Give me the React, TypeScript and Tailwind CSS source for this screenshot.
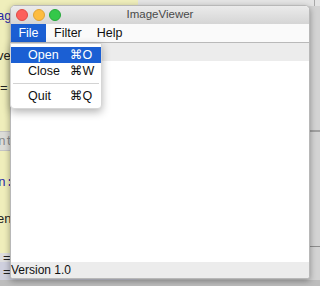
import { useState } from "react";

const font = { fontFamily: '"Liberation Sans", "DejaVu Sans", Arial, sans-serif' };
const mono = { fontFamily: '"Liberation Mono", "DejaVu Sans Mono", monospace' };

const menuItems = [
  { label: "Open", key: "⌘O", active: true },
  { label: "Close", key: "⌘W", active: false },
  { label: "sep", key: "", active: false },
  { label: "Quit", key: "⌘Q", active: false },
];

// slices of the editor window peeking out on the left, top to bottom
const editorRows = [
  { h: "h-[37px]", bg: "bg-[#efeebb]", text: "ag", cls: "text-[#2a2aa8] items-end pb-[15px] -ml-[3px]", f: font },
  { h: "h-[36px]", bg: "bg-[#efeebb]", text: "ve", cls: "text-[#222] items-center -ml-[3px]", f: font },
  { h: "h-[36px]", bg: "bg-[#efeebb]", text: "=", cls: "text-[#222] items-start pt-[8px]", f: font },
  { h: "h-[22px]", bg: "bg-[#efeebb]", text: "", cls: "", f: font },
  { h: "h-[20px]", bg: "bg-[#dcdcd8] border-y border-[#c4c4c4]", text: "nt", cls: "text-[#8a8a8a] items-center -ml-[2px]", f: mono },
  { h: "h-[42px]", bg: "bg-[#efeebb]", text: "n:", cls: "text-[#2a2aa8] items-end -ml-[2px] pb-[4px]", f: mono },
  { h: "h-[40px]", bg: "bg-[#efeebb]", text: "en", cls: "text-[#222] items-end -ml-[3px] pb-[8px]", f: font },
  { h: "h-[20px]", bg: "bg-[#efeebb]", text: "", cls: "", f: font },
  { h: "h-[9px]", bg: "bg-[#dedede]", text: "=", cls: "text-[#222] items-center pl-[3px]", f: font },
  { h: "h-[18px]", bg: "bg-[#cfd0de]", text: "=", cls: "text-[#222] items-center pl-[3px]", f: font },
  { h: "h-[6px]", bg: "bg-[#bdbdbd]", text: "", cls: "", f: font },
];

const Backdrop = () => (
  <div className="absolute inset-0 flex bg-[#d3d3d3]">
    <div className="w-[138px] flex flex-col overflow-hidden">
      {editorRows.map((r, i) => (
        <div key={i} className={`${r.h} ${r.bg} shrink-0 flex text-[13px] leading-none overflow-hidden ${r.cls}`} style={r.f}>
          {r.text}
        </div>
      ))}
    </div>
    <div className="flex-1 flex flex-col">
      <div className="h-[6px] bg-[#e4e4e4] flex justify-end pr-[5px]">
        <div className="w-[1px] bg-[#a8a8a8]" />
      </div>
      <div className="h-[124px]" />
      <div className="h-[2px] bg-[#a0a0a0]" />
      <div className="h-[114px]" />
      <div className="h-[1px] bg-[#8c8c8c]" />
      <div className="flex-1" />
      <div className="h-[6px] bg-[#bdbdbd]" />
    </div>
  </div>
);

const App = () => {
  const [open] = useState(true);

  return (
    <div className="relative w-[320px] h-[286px] overflow-hidden" style={font}>
      <Backdrop />

      <div className="absolute left-[10px] top-[5px] w-[300px] h-[274px] flex flex-col rounded-t-[5px] rounded-b-[3px] bg-white shadow-[0_2px_6px_rgba(0,0,0,0.35)] border border-[#b8b8b8] overflow-hidden">
        {/* title bar */}
        <div className="relative h-[18px] flex items-center justify-center bg-gradient-to-b from-[#ebebeb] to-[#d5d5d5]">
          <div className="absolute left-[5px] top-[3px] flex gap-[4.5px]">
            <span className="w-[12px] h-[12px] rounded-full bg-[#fc605c] border border-[#de4a45]" />
            <span className="w-[12px] h-[12px] rounded-full bg-[#fdbc40] border border-[#dea236]" />
            <span className="w-[12px] h-[12px] rounded-full bg-[#34c84a] border border-[#27a83b]" />
          </div>
          <span className="text-[11.5px] text-[#4a4a4a] leading-none">ImageViewer</span>
        </div>

        {/* menu bar */}
        <div className="h-[19px] flex items-stretch bg-[#fafafa] border-b border-[#b9b9b9] text-[12.5px] text-[#111]">
          <div className="w-[35px] flex items-center justify-center bg-[#1b5fd3] text-white">File</div>
          <div className="pl-[8px] pr-[15px] flex items-center">Filter</div>
          <div className="flex items-center">Help</div>
        </div>

        <div className="h-[18px] bg-[#ececec]" />
        <div className="flex-1 bg-white" />
        <div className="h-[16px] flex items-center bg-[#ececec] text-[12px] text-[#111]">
          <span>Version 1.0</span>
        </div>
      </div>

      {open && (
        <div className="absolute left-[10px] top-[43px] w-[92px] pt-[3px] pb-[4px] bg-white rounded-b-[4px] shadow-[0_3px_8px_rgba(0,0,0,0.3)] border border-[#d6d6d6] text-[12.5px]">
          {menuItems.map((m, i) =>
            m.label === "sep" ? (
              <div key={i} className="h-[9px] flex items-center px-[2px]">
                <div className="w-full h-[1px] bg-[#d3d3d3]" />
              </div>
            ) : (
              <div
                key={i}
                className={`h-[16px] flex items-center pl-[17px] ${m.active ? "bg-[#1b5fd3] text-white" : "text-[#111]"}`}
              >
                <span className="w-[42px]">{m.label}</span>
                <span>{m.key}</span>
              </div>
            )
          )}
        </div>
      )}
    </div>
  );
};

export default App;
